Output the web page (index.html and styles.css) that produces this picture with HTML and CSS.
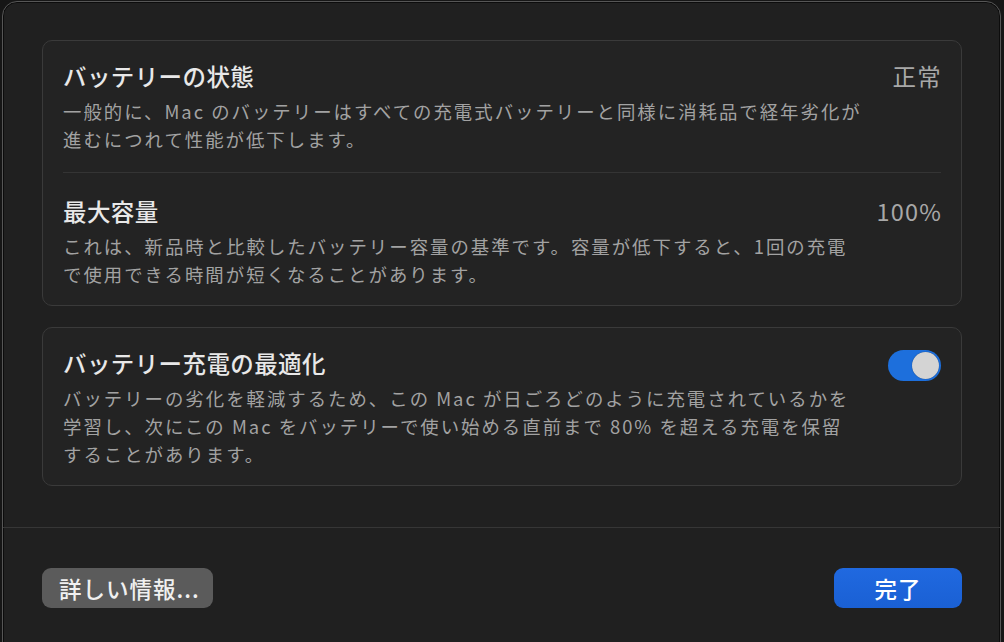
FILE: index.html
```html
<!DOCTYPE html>
<html lang="ja">
<head>
<meta charset="utf-8">
<link rel="stylesheet" href="styles.css">
</head>
<body>
<div class="window">
  <div class="content">
    <section class="card">
      <div class="row row-first">
        <div class="text">
          <div class="title">バッテリーの状態</div>
          <div class="desc">一般的に、Mac のバッテリーはすべての充電式バッテリーと同様に消耗品で経年劣化が<br>進むにつれて性能が低下します。</div>
        </div>
        <div class="value">正常</div>
      </div>
      <div class="divider"></div>
      <div class="row row-second">
        <div class="text">
          <div class="title">最大容量</div>
          <div class="desc">これは、新品時と比較したバッテリー容量の基準です。容量が低下すると、1回の充電<br>で使用できる時間が短くなることがあります。</div>
        </div>
        <div class="value">100%</div>
      </div>
    </section>
    <section class="card">
      <div class="row row-third">
        <div class="text">
          <div class="title">バッテリー充電の最適化</div>
          <div class="desc">バッテリーの劣化を軽減するため、この Mac が日ごろどのように充電されているかを<br>学習し、次にこの Mac をバッテリーで使い始める直前まで 80% を超える充電を保留<br>することがあります。</div>
        </div>
        <div class="toggle"><div class="knob"></div></div>
      </div>
    </section>
  </div>
  <div class="footer">
    <button class="btn btn-gray">詳しい情報...</button>
    <button class="btn btn-blue">完了</button>
  </div>
</div>
</body>
</html>
```

FILE: styles.css
```css
html, body {
  margin: 0;
  padding: 0;
  background: #161616;
  width: 1004px;
  height: 642px;
  overflow: hidden;
  font-family: "Noto Sans CJK JP", "Noto Sans", sans-serif;
}

.window {
  margin: 1px 0 0 2px;
  width: 999px;
  height: 660px;
  box-sizing: border-box;
  background: #202020;
  border: 1px solid #565656;
  border-radius: 15px;
  box-shadow: inset 0 0 0 1px #0c0c0c;
  display: flex;
  flex-direction: column;
}

.content {
  padding: 38px 38px 41px 39px;
  display: flex;
  flex-direction: column;
  gap: 21px;
}

.card {
  background: #232323;
  border: 1px solid #3a3a3a;
  border-radius: 10px;
  padding: 0 20px;
}

.row {
  display: flex;
  align-items: flex-start;
  justify-content: space-between;
}

.row-first { padding: 20px 0 19px; }
.row-second { padding: 23px 0 17px; }
.row-third { padding: 20px 0 17px; }

.title {
  font-size: 23.5px;
  line-height: 30px;
  color: #e8e8e8;
  font-weight: 500;
  letter-spacing: 0.4px;
  margin-bottom: 6px;
  white-space: nowrap;
}

.desc {
  font-size: 18.4px;
  line-height: 28px;
  letter-spacing: 2px;
  color: #a2a2a2;
  white-space: nowrap;
}

.value {
  font-size: 23.5px;
  line-height: 30px;
  letter-spacing: 1.2px;
  margin-right: -1px;
  color: #a8a8a8;
  white-space: nowrap;
}

.divider {
  height: 1px;
  background: #343434;
}

.toggle {
  margin-top: 2px;
  width: 53px;
  height: 31px;
  border-radius: 16px;
  background: #1d6fdc;
  box-sizing: border-box;
  padding: 2px;
  display: flex;
  justify-content: flex-end;
}

.knob {
  width: 27px;
  height: 27px;
  border-radius: 50%;
  background: #d4d4d4;
  box-shadow: 0 0 1px rgba(0,0,0,0.5);
}

.footer {
  border-top: 1px solid #363636;
  padding: 40px 38px 0 39px;
  display: flex;
  justify-content: space-between;
  align-items: flex-start;
}

.btn {
  height: 40px;
  border: none;
  border-radius: 9px;
  font-family: "Noto Sans CJK JP", "Noto Sans", sans-serif;
  font-size: 22.5px;
  font-weight: 500;
  color: #f0f0f0;
  padding: 0;
  display: flex;
  align-items: center;
  justify-content: center;
}

.btn-gray {
  width: 171px;
  background: #5b5b5b;
  justify-content: flex-start;
  padding-left: 17px;
  letter-spacing: 1px;
}

.btn-blue {
  width: 128px;
  background: linear-gradient(#2069e0, #1a60d4);
  color: #ffffff;
  letter-spacing: 1px;
}
```
